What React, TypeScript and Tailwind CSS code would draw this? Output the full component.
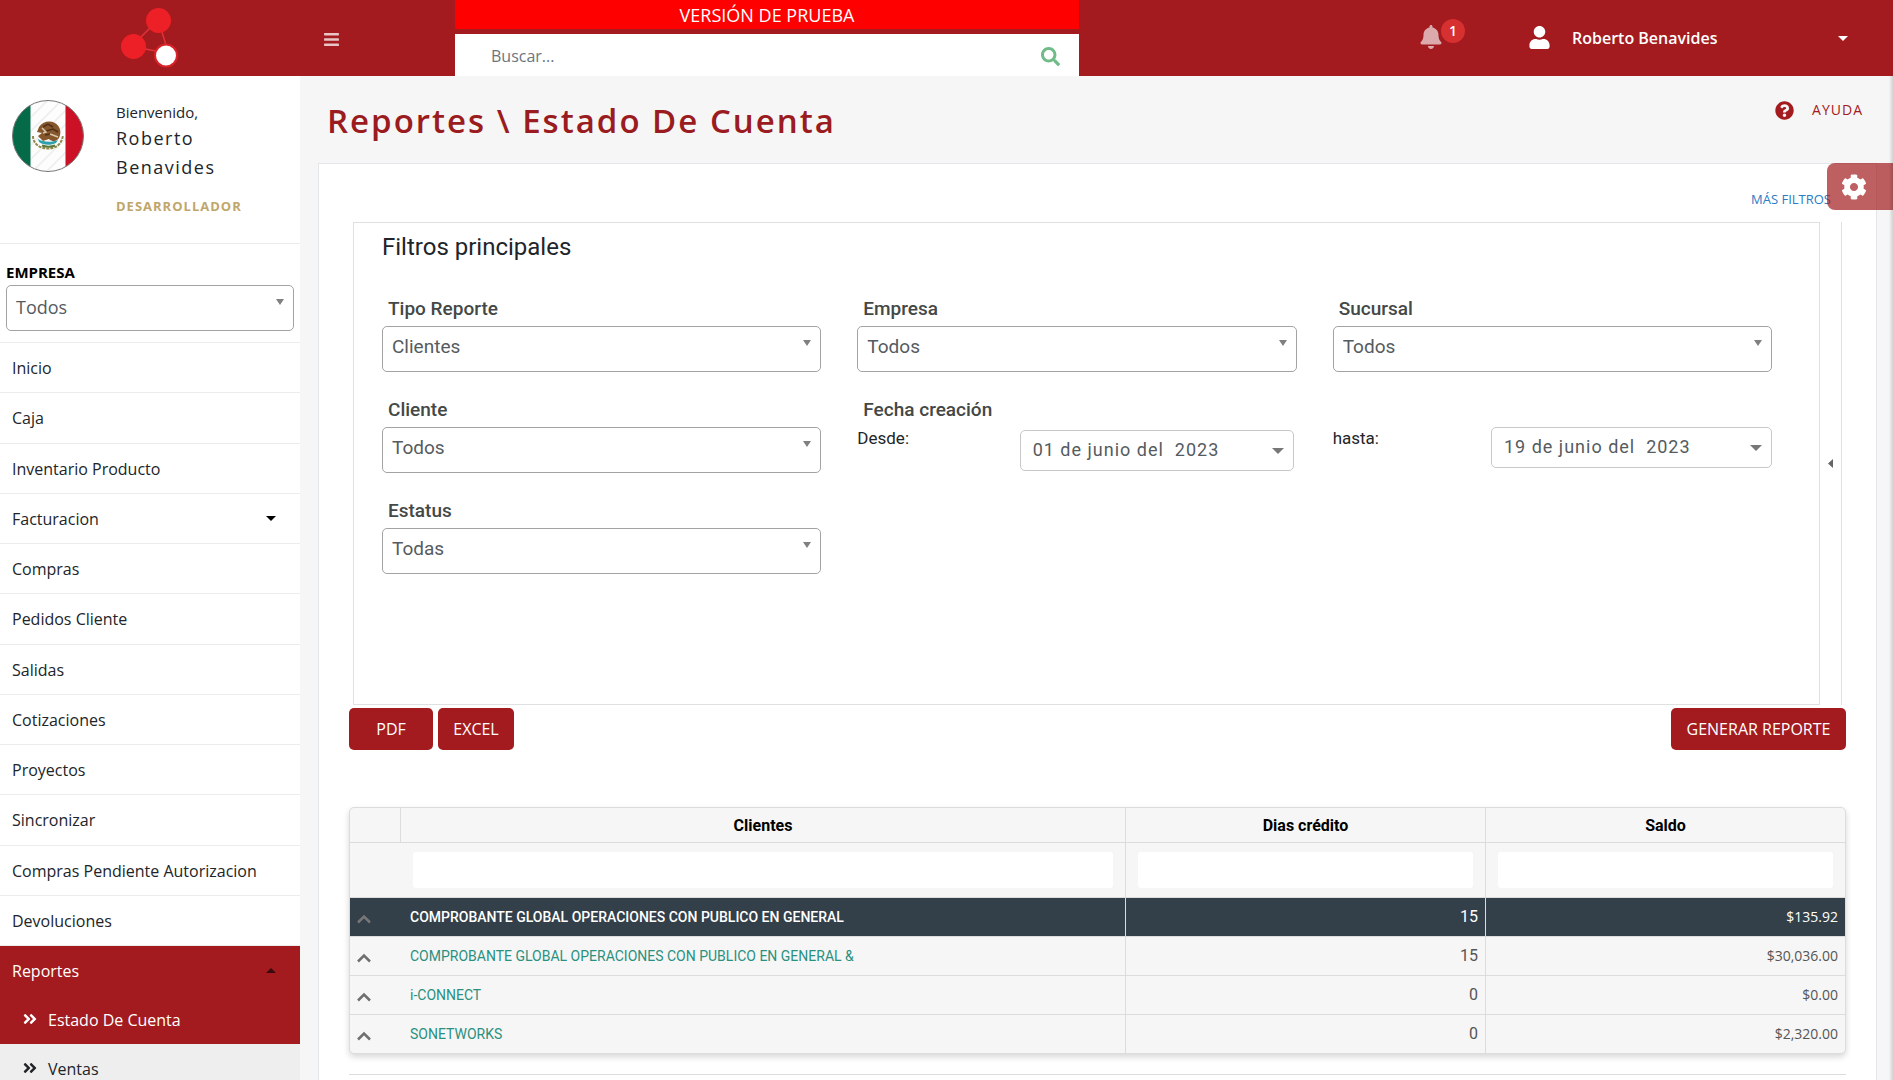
import React from "react";
import { FaBars, FaBell, FaSearch, FaUser, FaQuestionCircle, FaCog, FaAngleDoubleRight } from "react-icons/fa";

const menuItems = [
  "Inicio",
  "Caja",
  "Inventario Producto",
  "Facturacion",
  "Compras",
  "Pedidos Cliente",
  "Salidas",
  "Cotizaciones",
  "Proyectos",
  "Sincronizar",
  "Compras Pendiente Autorizacion",
  "Devoluciones",
];

const rows = [
  { client: "COMPROBANTE GLOBAL OPERACIONES CON PUBLICO EN GENERAL", days: "15", balance: "$135.92", selected: true },
  { client: "COMPROBANTE GLOBAL OPERACIONES CON PUBLICO EN GENERAL &", days: "15", balance: "$30,036.00", selected: false },
  { client: "i-CONNECT", days: "0", balance: "$0.00", selected: false },
  { client: "SONETWORKS", days: "0", balance: "$2,320.00", selected: false },
];

function Logo() {
  return (
    <svg width="60" height="70" viewBox="0 0 60 70" aria-hidden="true">
      <g stroke="#e0343a" strokeWidth="1.5" fill="none">
        <path d="M21 37 L30 28" />
        <path d="M42 32 L46 45" />
        <path d="M25 49 L36 51" />
      </g>
      <circle cx="38.5" cy="20.500" r="12.5" fill="#ee2027" />
      <circle cx="13.5" cy="46.500" r="12.5" fill="#ee2027" />
      <circle cx="46" cy="55.500" r="11" fill="#fff" stroke="#d9232a" strokeWidth="2" />
    </svg>
  );
}

function Flag() {
  return (
    <svg width="72" height="72" viewBox="0 0 72 72" className="shrink-0" role="img" aria-label="México">
      <defs>
        <clipPath id="flag-circle">
          <circle cx="36" cy="36" r="35.5" />
        </clipPath>
      </defs>
      <g clipPath="url(#flag-circle)">
        <rect width="72" height="72" fill="#fdfdfd" />
        <g stroke="#f0f0f0" strokeWidth="2">
          <path d="M12 24 L38 -2 M12 38 L52 -2 M12 52 L60 4 M12 66 L60 18 M18 74 L60 32 M32 74 L60 46 M46 74 L60 60" />
        </g>
        <rect width="18.5" height="72" fill="#046a47" />
        <rect x="53.5" width="19" height="72" fill="#cc1126" />
        <path d="M21 36 C21 44 28 48.500 36 48.500 C44 48.500 50 44 51 35" fill="none" stroke="#8f8a4a" strokeWidth="2" strokeDasharray="3 1" />
        <path d="M27 27 C30 22 37 20 43 23 C48 26 50 32 47 38 C44 42 40 42 37 39 L31 41 L26 36 L30 33 L25 32 Z" fill="#86572c" />
        <path d="M31 27 L36 24 L41 27 M34 31 L41 29 L46 32 M33 35 L39 34" stroke="#4f2f17" strokeWidth="1.500" fill="none" />
        <path d="M30 28 L34 32 L31 33 M38 34 L46 37" stroke="#d8c6a8" strokeWidth="1.500" fill="none" />
        <path d="M26 39 C31 42 39 43 46 40 L44 43 C38 46 31 45 27 42 Z" fill="#2d9fae" />
        <path d="M30 45.500 C34 47 39 47 43 45.500" stroke="#5e7a3a" strokeWidth="2" fill="none" />
      </g>
      <circle cx="36" cy="36" r="35.5" fill="none" stroke="#777" strokeWidth="1" />
    </svg>
  );
}

function Caret({ className, up = false }: { className: string; up?: boolean }) {
  return (
    <svg width="10" height="5" viewBox="0 0 10 5" className={className} aria-hidden="true">
      <path d={up ? "M0 5 L5 0 L10 5 Z" : "M0 0 L5 5 L10 0 Z"} fill="currentColor" />
    </svg>
  );
}

function SelectBox({ id, value, className }: { id: string; value: string; className: string }) {
  return (
    <div className="relative">
      <select
        id={id}
        defaultValue={value}
        className={`block h-[46px] w-full appearance-none rounded-[5px] border border-[#a3a3a3] bg-white pl-[9px] pr-8 text-[#555b60] ${className}`}
      >
        <option>{value}</option>
      </select>
      <svg width="8" height="6" viewBox="0 0 8 6" className="pointer-events-none absolute right-[10px] top-[14px]" aria-hidden="true">
        <path d="M0 0 H8 L4 6 Z" fill="#808080" />
      </svg>
    </div>
  );
}

function Field({ id, label, value }: { id: string; label: string; value: string }) {
  return (
    <div className="font-[Roboto]">
      <label htmlFor={id} className="block pl-[6px] text-[19px] font-medium leading-[34px] text-[#444846]">
        {label}
      </label>
      <SelectBox id={id} value={value} className="pb-1 text-[19px]" />
    </div>
  );
}

function DateField({ id, label, value, className }: { id: string; label: string; value: string; className: string }) {
  return (
    <div className="flex items-start justify-between font-[Roboto]">
      <label htmlFor={id} className="text-[17px] leading-[22px] text-[#212529]">
        {label}
      </label>
      <div className={`flex h-[41px] items-center rounded-[5px] border border-[#c8c8c8] pr-[9px] ${className}`}>
        <input
          id={id}
          defaultValue={value}
          className="h-full min-w-0 flex-1 whitespace-pre bg-transparent pb-[2px] pl-3 text-[18px] tracking-[1px] text-[#555b60] outline-none"
        />
        <button type="button" aria-label="Abrir calendario" className="text-[#777]">
          <svg width="12" height="6" viewBox="0 0 12 6" aria-hidden="true">
            <path d="M0 0 H12 L6 6 Z" fill="currentColor" />
          </svg>
        </button>
      </div>
    </div>
  );
}

function Header() {
  return (
    <header className="flex h-[76px] shrink-0 bg-[#a31b1e] text-white">
      <div className="flex w-[300px] shrink-0 items-start justify-center">
        <Logo />
      </div>
      <div className="w-[155px] shrink-0 pl-[23px] pt-[31px]">
        <button type="button" aria-label="Menú" className="block text-[#e9c5c6]">
          <FaBars size={17} />
        </button>
      </div>
      <div className="flex w-[624px] flex-col justify-between">
        <div className="h-[29px] bg-[#ff0000] text-center text-[18px] leading-[30px]">VERSIÓN DE PRUEBA</div>
        <form className="flex h-[42px] items-center bg-white pl-9 pr-[19px] pt-[2px]">
          <input
            aria-label="Buscar"
            placeholder="Buscar..."
            className="min-w-0 flex-1 text-base text-gray-600 outline-none placeholder:text-[#6c757d]"
          />
          <button type="button" aria-label="Buscar" className="text-[#70bb88]">
            <FaSearch size={19} />
          </button>
        </form>
      </div>
      <div className="flex flex-1 items-start justify-end pr-[45px]">
        <button type="button" aria-label="Notificaciones" className="relative mr-[85px] mt-[25px] text-[#dcaaac]">
          <FaBell size={24} />
          <span className="absolute -top-[6px] left-[22px] h-6 w-6 rounded-full bg-[#d63031] text-center text-sm font-semibold leading-6 text-white">
            1
          </span>
        </button>
        <button type="button" className="mt-[24px] flex w-[320px] items-center">
          <FaUser size={23} className="-mt-[2px]" />
          <span className="ml-[21px] flex-1 text-left text-base font-semibold leading-7">Roberto Benavides</span>
          <Caret className="text-white" />
        </button>
      </div>
    </header>
  );
}

function Sidebar() {
  return (
    <aside className="w-[300px] shrink-0 overflow-hidden bg-white text-[#212529]">
      <div className="flex h-[168px] gap-8 border-b border-[#ececec] pl-3 pt-6">
        <Flag />
        <div>
          <p className="text-[15px] leading-6">Bienvenido,</p>
          <p className="w-[120px] text-[18px] font-medium leading-[29px] tracking-[1.5px]">Roberto Benavides</p>
          <p className="mt-3 text-[13px] font-bold leading-6 tracking-[1px] text-[#bfa66a]">DESARROLLADOR</p>
        </div>
      </div>
      <div className="h-[99px] border-b border-[#ececec] px-[6px] pt-4">
        <label htmlFor="side-company" className="block text-[15px] font-bold leading-[25px] text-black">
          EMPRESA
        </label>
        <SelectBox id="side-company" value="Todos" className="pb-[2px] text-[18px]" />
      </div>
      <nav>
        <ul className="grid h-[603px] auto-rows-fr">
          {menuItems.map((item) => (
            <li key={item} className="border-b border-[#ececec]">
              <a href="#" className="flex h-full items-center justify-between pl-3 pr-6 pt-px text-base">
                {item}
                {item === "Facturacion" && <Caret className="text-black" />}
              </a>
            </li>
          ))}
        </ul>
        <a href="#" className="flex h-[49px] items-center justify-between bg-[#a31b1e] pl-3 pr-6 text-base text-white">
          Reportes
          <Caret up className="text-[#3a0b0c]" />
        </a>
        <a href="#" className="flex h-[49px] items-center bg-[#a31b1e] pl-[22px] text-base text-white">
          <FaAngleDoubleRight size={16} className="mr-[10px] -mt-[2px]" />
          Estado De Cuenta
        </a>
        <a href="#" className="flex h-[49px] items-center bg-[#eeeeee] pl-[22px] text-base">
          <FaAngleDoubleRight size={16} className="mr-[10px] -mt-[2px]" />
          Ventas
        </a>
      </nav>
    </aside>
  );
}

function Filters() {
  return (
    <div className="mr-[34px] ml-[34px] flex h-[483px] border-r border-[#dee0e2]">
      <section className="flex-1 border border-[#dee0e2] pl-[28px] pr-[47px]">
        <h2 className="pt-1 font-[Roboto] text-[24px] leading-10 text-[#212529]">Filtros principales</h2>
        <div className="mt-[25px] grid grid-cols-3 gap-x-9 gap-y-[21px]">
          <Field id="report-type" label="Tipo Reporte" value="Clientes" />
          <Field id="company" label="Empresa" value="Todos" />
          <Field id="branch" label="Sucursal" value="Todos" />
          <Field id="client" label="Cliente" value="Todos" />
          <div>
            <p className="pl-[6px] font-[Roboto] text-[19px] font-medium leading-[34px] text-[#444846]">Fecha creación</p>
            <div className="pr-[3px]">
              <DateField id="from" label="Desde:" value="01 de junio del  2023" className="mt-[3px] w-[274px]" />
            </div>
          </div>
          <div className="pt-[34px]">
            <DateField id="to" label="hasta:" value="19 de junio del  2023" className="w-[281px]" />
          </div>
          <Field id="status" label="Estatus" value="Todas" />
        </div>
      </section>
      <button type="button" aria-label="Contraer filtros" className="flex w-[21px] items-center justify-center text-[#666]">
        <svg width="5" height="9" viewBox="0 0 5 9" aria-hidden="true">
          <path d="M5 0 V9 L0 4.500 Z" fill="currentColor" />
        </svg>
      </button>
    </div>
  );
}

function ReportTable() {
  return (
    <div className="overflow-hidden rounded-[5px] border border-[#dcdcdc] bg-[#f6f6f6] font-[Roboto] shadow-[0_3px_6px_rgba(0,0,0,0.16)]">
      <table className="w-full table-fixed border-separate border-spacing-0">
        <colgroup>
          <col className="w-[50px]" />
          <col />
          <col className="w-[360px]" />
          <col className="w-[360px]" />
        </colgroup>
        <thead>
          <tr className="h-[35px] text-base text-black">
            <th className="border-b border-[#dcdcdc]" aria-label="Detalle"></th>
            <th className="border-b border-l border-[#dcdcdc] pt-px font-bold">Clientes</th>
            <th className="border-b border-l border-[#dcdcdc] pt-px font-bold">Dias crédito</th>
            <th className="border-b border-l border-[#dcdcdc] pt-px font-bold">Saldo</th>
          </tr>
          <tr className="h-[54px]">
            <td></td>
            <td className="pl-[13px] pr-3">
              <input aria-label="Filtrar clientes" className="block h-9 w-full rounded-[3px] bg-white px-2" />
            </td>
            <td className="border-l border-[#dcdcdc] px-3">
              <input aria-label="Filtrar dias crédito" className="block h-9 w-full rounded-[3px] bg-white px-2" />
            </td>
            <td className="border-l border-[#dcdcdc] px-3">
              <input aria-label="Filtrar saldo" className="block h-9 w-full rounded-[3px] bg-white px-2" />
            </td>
          </tr>
        </thead>
        <tbody>
          {rows.map((row) => (
            <tr key={row.client} className={row.selected ? "h-[39px] bg-[#333f49] text-white" : "h-[39px] text-[#555]"}>
              <td className="border-t border-[#dcdcdc] pl-[7px] pt-1">
                <button type="button" aria-label="Expandir" className={row.selected ? "block text-[#777]" : "block text-[#6f6f6f]"}>
                  <svg width="14" height="10" viewBox="0 0 14 10" aria-hidden="true">
                    <path d="M1 8.500 L7 2.500 L13 8.500" stroke="currentColor" strokeWidth="2.500" fill="none" />
                  </svg>
                </button>
              </td>
              <td
                className={
                  row.selected
                    ? "border-t border-[#dcdcdc] pl-[10px] text-sm font-medium"
                    : "border-t border-[#dcdcdc] pl-[10px] text-sm text-[#2a9080]"
                }
              >
                {row.client}
              </td>
              <td className="border-l border-t border-[#dcdcdc] pr-[7px] text-right text-base">{row.days}</td>
              <td className="border-l border-t border-[#dcdcdc] pr-[7px] text-right font-['Open_Sans'] text-sm">{row.balance}</td>
            </tr>
          ))}
        </tbody>
      </table>
    </div>
  );
}

export default function App() {
  const primaryButton = "h-[42px] rounded-[5px] bg-[#a31b1e] text-base text-white";
  return (
    <div className="flex h-screen flex-col overflow-hidden font-['Open_Sans',sans-serif]">
      <Header />
      <div className="flex min-h-0 flex-1">
        <Sidebar />
        <main className="relative min-w-0 flex-1 overflow-hidden bg-[#f6f6f6] pl-[18px] pr-4">
          <div className="flex h-[87px] items-start justify-between pl-[9px] pr-[14px]">
            <h1 className="pt-[20px] text-[33px] font-semibold leading-[50px] tracking-[2px] text-[#9a1b20]">
              Reportes \ Estado De Cuenta
            </h1>
            <a href="#" className="flex items-center gap-[18px] pt-[22px] text-[14px] leading-6 tracking-[1px] text-[#a31b1e]">
              <FaQuestionCircle size={19} />
              AYUDA
            </a>
          </div>
          <div className="h-[1000px] border border-[#e4e7e9] bg-white">
            <div className="flex h-[58px] items-center justify-end pr-[45px] pt-[13px]">
              <a href="#" className="text-[13px] text-[#2a7cc4]">
                MÁS FILTROS
              </a>
            </div>
            <Filters />
            <div className="px-[30px]">
              <div className="mt-[3px] flex gap-[5px]">
                <button type="button" className={`w-[84px] ${primaryButton}`}>PDF</button>
                <button type="button" className={`w-[76px] ${primaryButton}`}>EXCEL</button>
                <button type="button" className={`ml-auto w-[175px] ${primaryButton}`}>GENERAR REPORTE</button>
              </div>
              <div className="mt-[57px]">
                <ReportTable />
              </div>
              <hr className="mt-5 border-[#dcdcdc]" />
            </div>
          </div>
          <button
            type="button"
            aria-label="Configuración"
            className="absolute right-0 top-[87px] flex h-[47px] w-[66px] items-center rounded-l-lg bg-[#a31b1e]/70 pl-[14px] text-white"
          >
            <FaCog size={26} />
          </button>
          <div className="pointer-events-none absolute inset-y-0 right-0 w-1 bg-linear-to-r from-transparent to-black/15" />
        </main>
      </div>
    </div>
  );
}
